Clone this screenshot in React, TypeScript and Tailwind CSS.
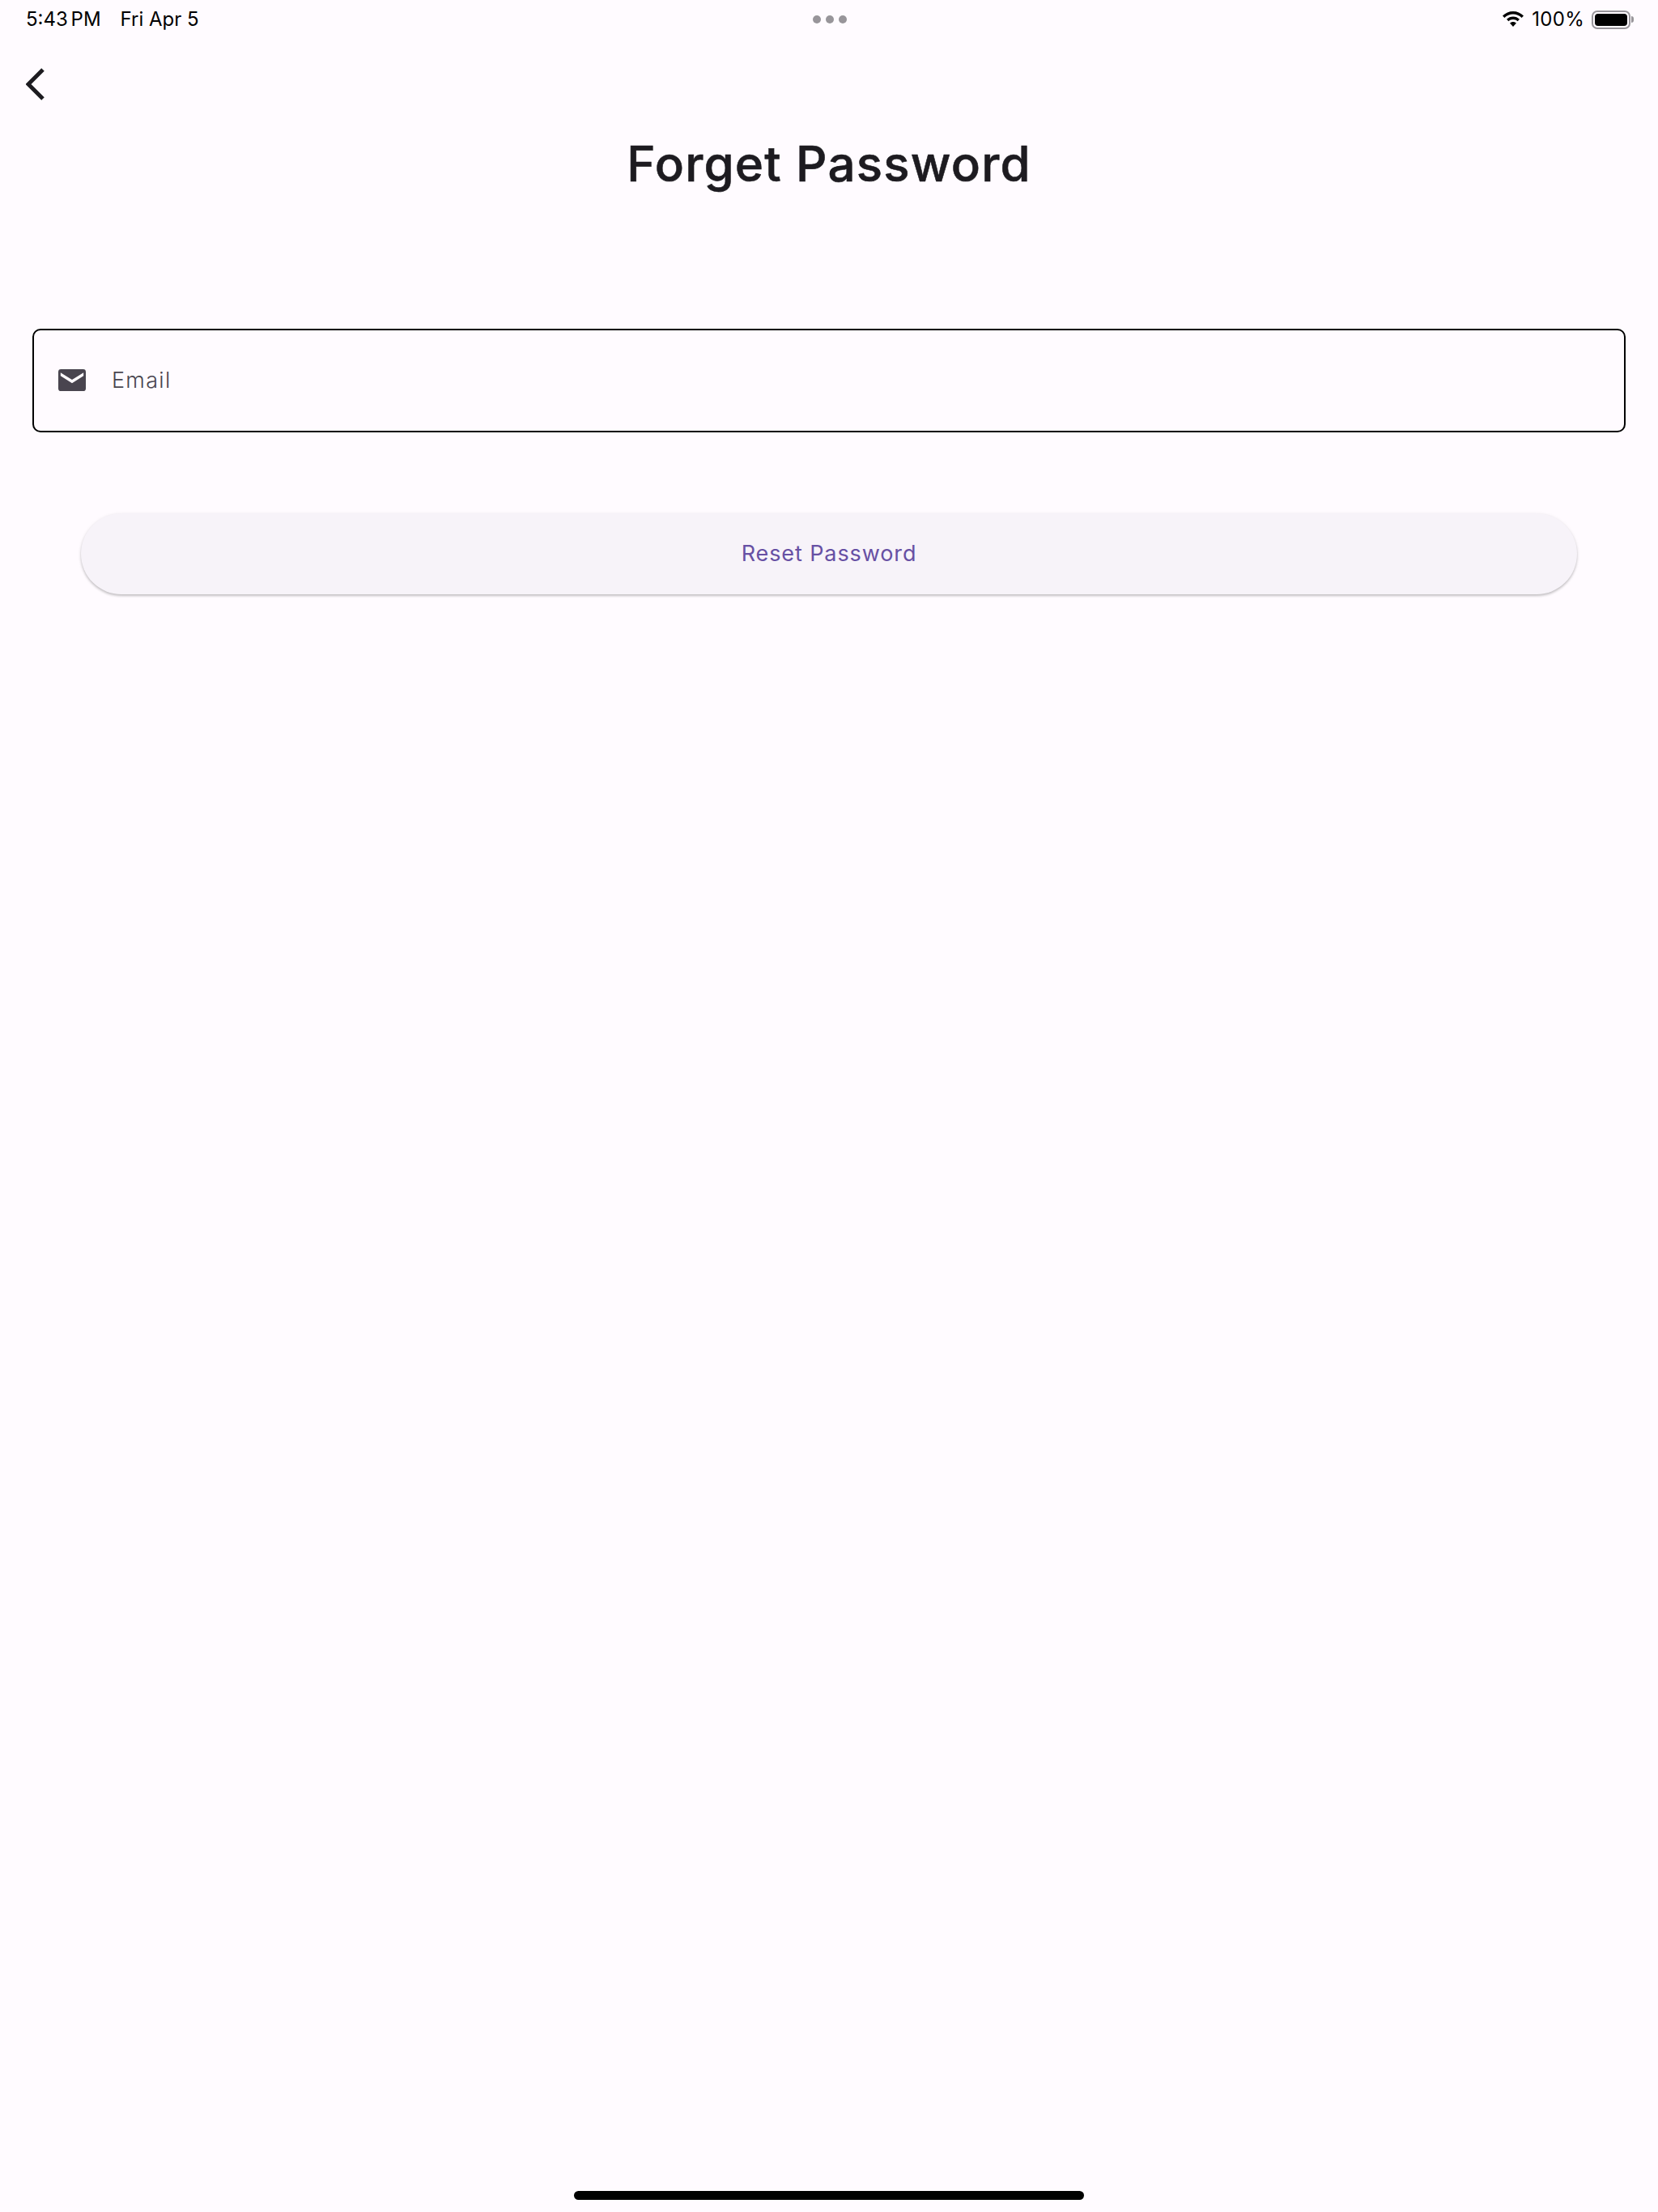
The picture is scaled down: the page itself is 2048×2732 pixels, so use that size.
function StatusBar() {
  return (
    <div className="grid h-[48px] grid-cols-3 items-center pl-[32px] pr-[30px] text-[24px] text-black">
      <div className="flex gap-[24px]">
        <span className="[word-spacing:-3px]">5:43 PM</span>
        <span>Fri Apr 5</span>
      </div>
      <div className="flex justify-center gap-[6px]">
        <span className="size-[10px] rounded-full bg-[#98959a]" />
        <span className="size-[10px] rounded-full bg-[#98959a]" />
        <span className="size-[10px] rounded-full bg-[#98959a]" />
      </div>
      <div className="flex items-center justify-end gap-[9px]">
        <svg width="28" height="22" viewBox="0 0 28 22" className="-ml-[2px] text-black">
          <path d="M14 1C9 1 4.500 3 1 6.500l2.400 2.400C6.200 6 10 4.400 14 4.400s7.800 1.600 10.600 4.500L27 6.500C23.500 3 19 1 14 1z" fill="currentColor" />
          <path d="M14 7.500c-3 0-5.800 1.200-8 3.300l2.400 2.500c1.500-1.500 3.400-2.300 5.600-2.300s4.100.8 5.600 2.300l2.400-2.500c-2.200-2.100-5-3.300-8-3.300z" fill="currentColor" />
          <path d="M14 14c-1.500 0-2.900.6-4 1.600l4 4.400 4-4.400c-1.100-1-2.500-1.600-4-1.600z" fill="currentColor" />
        </svg>
        <span className="tracking-[0.300px]">100%</span>
        <div className="flex items-center">
          <div className="h-[23px] w-[48px] rounded-[7px] border-2 border-[#98959a] p-[2px]">
            <div className="h-full w-full rounded-[4px] bg-black" />
          </div>
          <div className="ml-[1px] h-[8px] w-[3px] rounded-r-full bg-[#98959a]" />
        </div>
      </div>
    </div>
  );
}

export default function App() {
  return (
    <div className="flex h-[2732px] flex-col justify-between bg-[#fffbff] font-['Inter',sans-serif]">
      <div>
        <StatusBar />
        <div className="pl-[32px] pt-[35px]">
          <svg width="24" height="42" viewBox="0 0 24 42" fill="none" className="text-[#1d1b20]">
            <path d="M21 3 3 21l18 18" stroke="currentColor" strokeWidth="5" />
          </svg>
        </div>
        <h1 className="mt-[37px] text-center text-[60px] leading-[80px] font-medium tracking-[1.200px] text-[#1d1b20] [-webkit-text-stroke:0.6px_#1d1b20]">
          Forget Password
        </h1>
        <div className="mx-[40px] mt-[164px] flex h-[128px] items-center rounded-[10px] border-2 border-black pl-[30px]">
          <svg width="34" height="27" viewBox="0 0 36 28" preserveAspectRatio="none" className="-mt-[2px]">
            <path
              d="M3.500 0h29A3.500 3.500 0 0 1 36 3.500v21a3.500 3.500 0 0 1-3.500 3.500h-29A3.500 3.500 0 0 1 0 24.500v-21A3.500 3.500 0 0 1 3.500 0zM3 4.500v4l15 9.500 15-9.500v-4l-15 9z"
              fill="#49454f"
              fillRule="evenodd"
            />
          </svg>
          <span className="ml-[32px] pt-[1px] text-[27px] font-light tracking-[1.300px] text-[#49454f]">Email</span>
        </div>
        <div className="mx-[100px] mt-[100px] flex h-[100px] items-center justify-center rounded-full bg-[#f7f3f9] text-[27px] tracking-[0.900px] text-[#6750a4] shadow-[0_2px_3px_rgba(0,0,0,0.2),0_1px_5px_rgba(0,0,0,0.07)]">
          Reset Password
        </div>
      </div>
      <div className="flex justify-center pb-[15px]">
        <div className="h-[11px] w-[630px] rounded-full bg-black" />
      </div>
    </div>
  );
}
